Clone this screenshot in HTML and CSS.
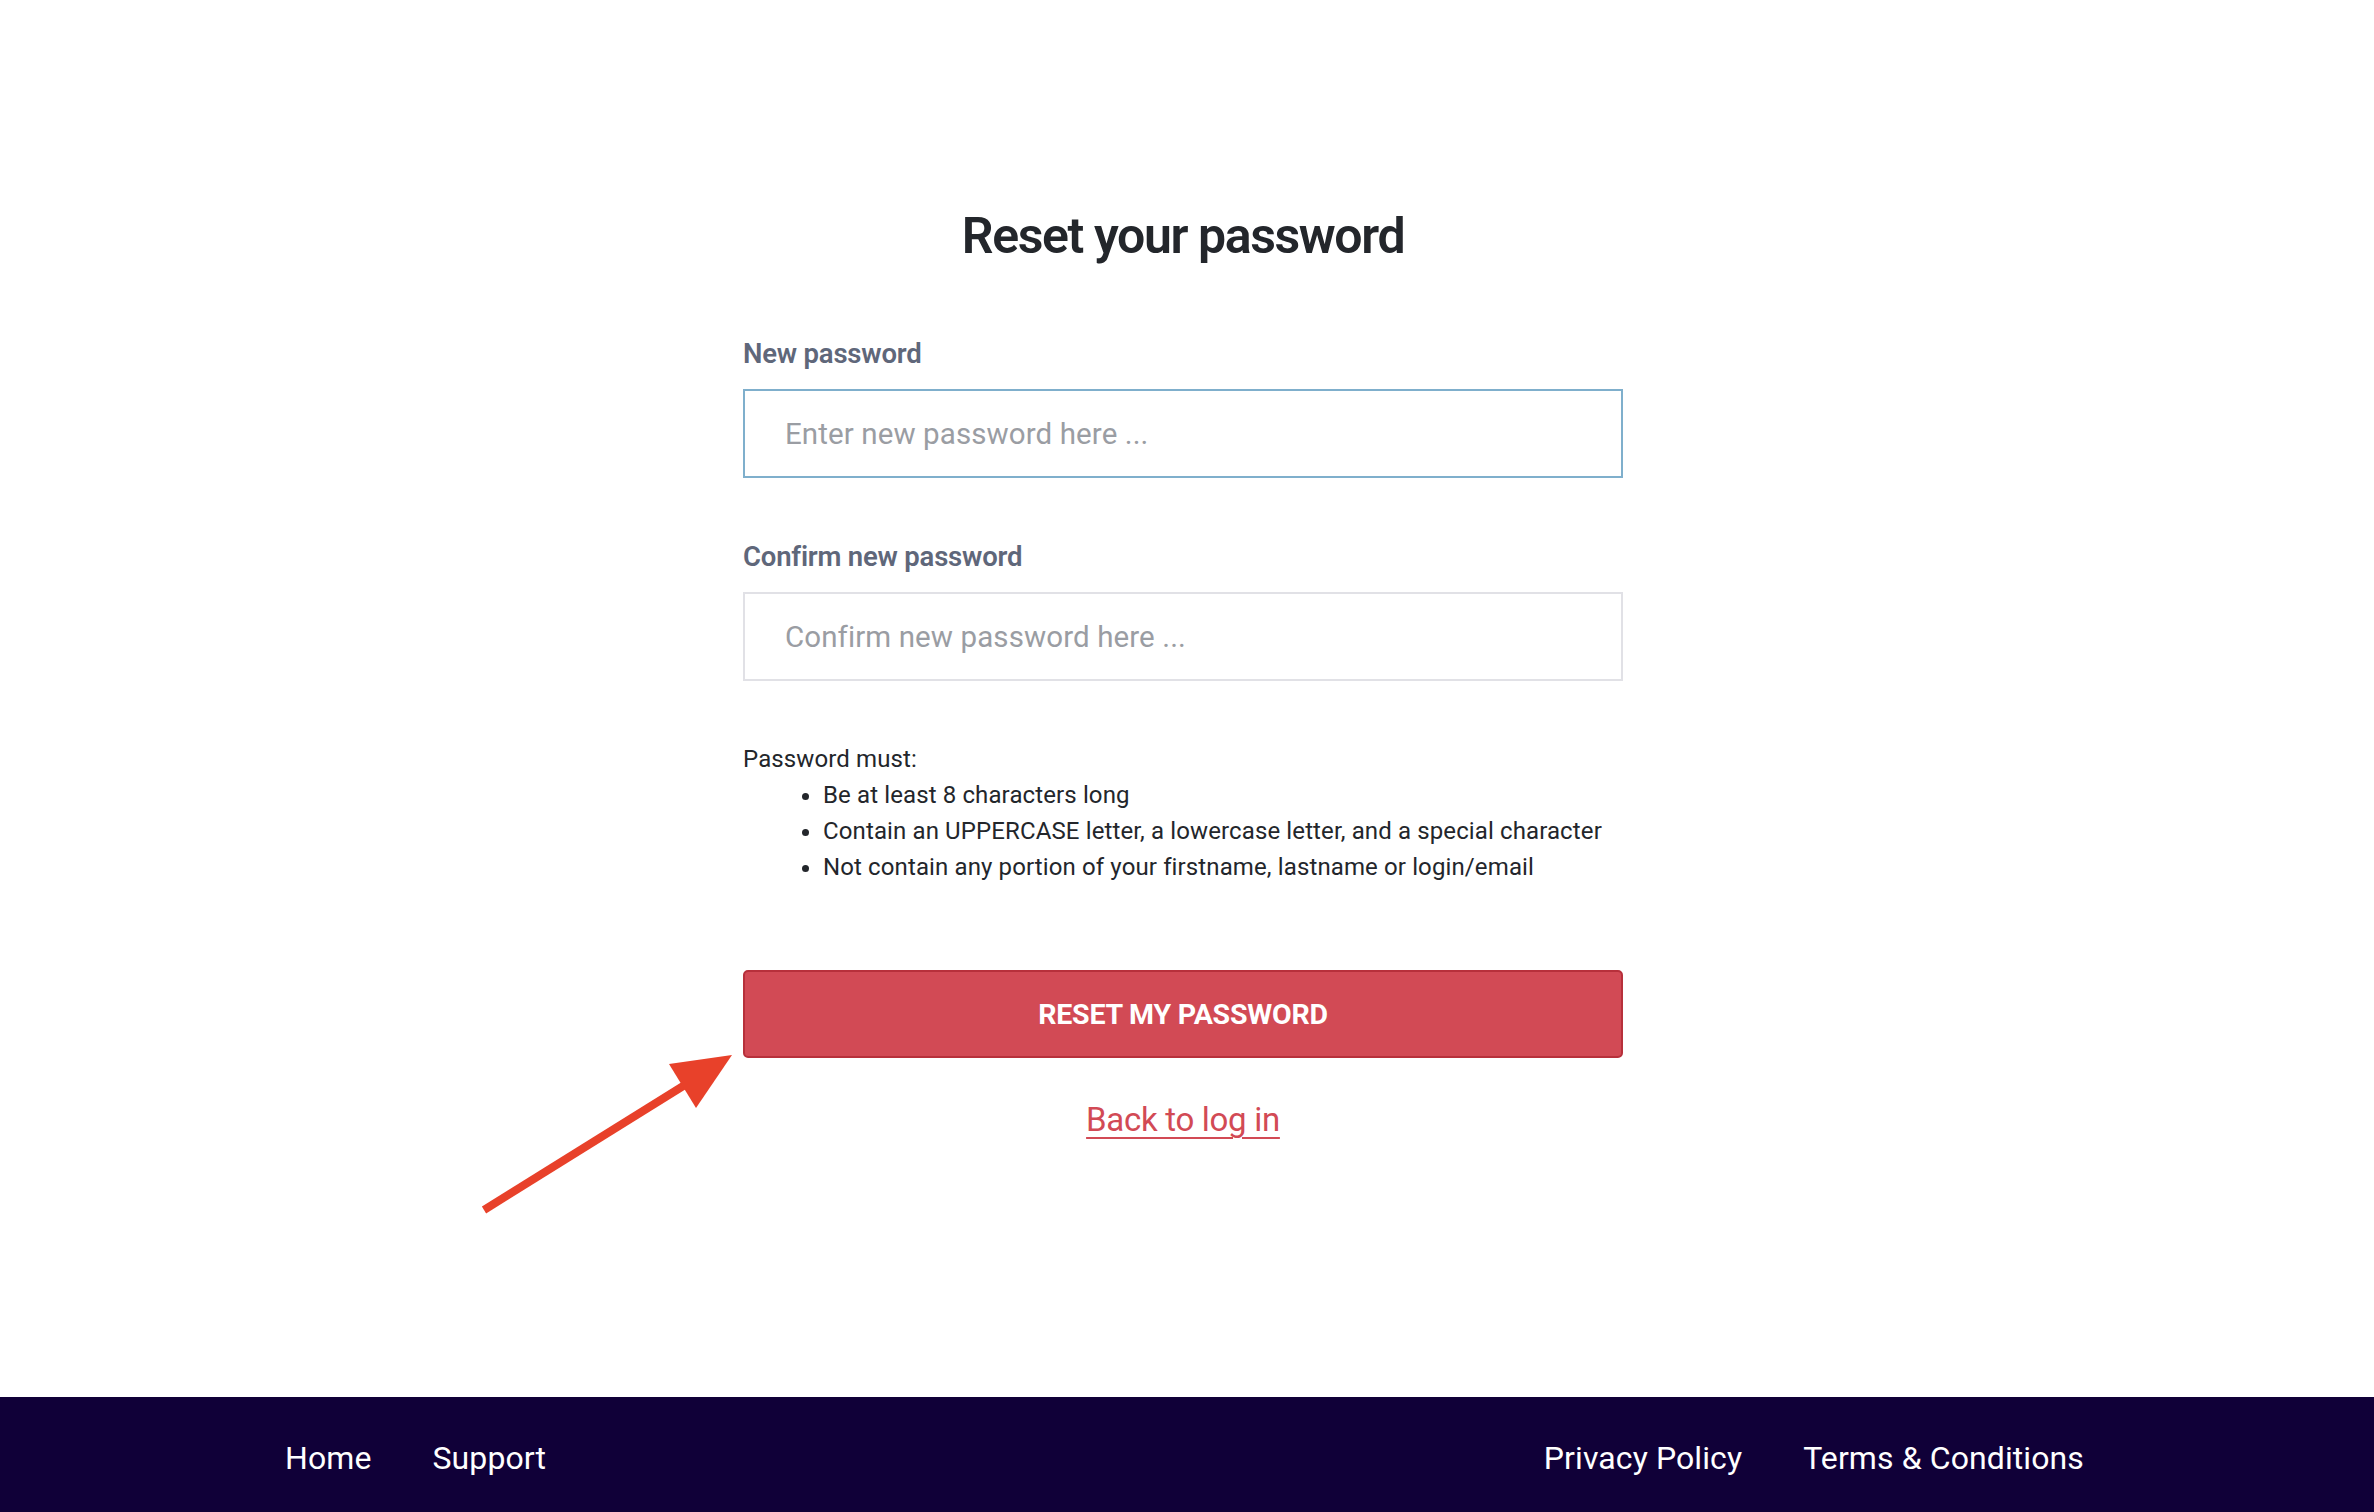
FILE: index.html
```html
<!DOCTYPE html>
<html lang="en">
<head>
<meta charset="utf-8">
<title>Reset your password</title>
<link rel="stylesheet" href="styles.css">
</head>
<body>
<main class="page">
  <section class="card">
    <h1 class="title">Reset your password</h1>
    <form class="form">
      <div class="field">
        <label class="label" for="pw1">New password</label>
        <input class="input input-focus" id="pw1" type="password" placeholder="Enter new password here ...">
      </div>
      <div class="field">
        <label class="label" for="pw2">Confirm new password</label>
        <input class="input" id="pw2" type="password" placeholder="Confirm new password here ...">
      </div>
      <div class="rules">
        <p class="rules-head">Password must:</p>
        <ul class="rules-list">
          <li>Be at least 8 characters long</li>
          <li>Contain an UPPERCASE letter, a lowercase letter, and a special character</li>
          <li>Not contain any portion of your firstname, lastname or login/email</li>
        </ul>
      </div>
      <button class="btn" type="button">RESET MY PASSWORD</button>
      <a class="back" href="#">Back to log in</a>
    </form>
  </section>
  <svg class="arrow" width="260" height="170" viewBox="0 0 260 170">
    <line x1="6" y1="160" x2="210" y2="33" stroke="#e8412a" stroke-width="8"/>
    <polygon points="254,5 191,14 218,58" fill="#e8412a"/>
  </svg>
</main>
<footer class="footer">
  <nav class="foot-left">
    <a href="#">Home</a>
    <a href="#">Support</a>
  </nav>
  <nav class="foot-right">
    <a href="#">Privacy Policy</a>
    <a href="#">Terms &amp; Conditions</a>
  </nav>
</footer>
</body>
</html>
```
FILE: styles.css
```css
* { box-sizing: border-box; }
html, body { margin: 0; padding: 0; }
body {
  font-family: Roboto, "Noto Sans", sans-serif;
  color: #23262b;
  background: #fff;
}
.page {
  position: relative;
  height: 1397px;
  display: flex;
  justify-content: center;
  padding-top: 206px;
}
.card {
  width: 880px;
  margin-right: 8px;
  display: flex;
  flex-direction: column;
}
.title {
  margin: 0 0 73px;
  text-align: center;
  font-size: 50px;
  line-height: 60px;
  font-weight: 600;
  letter-spacing: -1.4px;
  color: #23262b;
}
.form { display: flex; flex-direction: column; }
.field { display: flex; flex-direction: column; margin-bottom: 64px; }
.field + .field { margin-bottom: 60px; }
.label {
  font-size: 27.5px;
  line-height: 30px;
  font-weight: 600;
  letter-spacing: -0.2px;
  color: #5f677a;
  margin-bottom: 20px;
}
.input {
  height: 89px;
  border: 2px solid #e1e1e6;
  border-radius: 0;
  padding: 0 40px;
  font-family: Roboto, "Noto Sans", sans-serif;
  font-size: 29.5px;
  letter-spacing: 0.1px;
  color: #23262b;
  background: #fff;
  outline: none;
}
.input::placeholder { color: #9a9da3; }
.input-focus { border-color: #7fafcc; }
.rules { font-size: 24px; line-height: 36px; letter-spacing: 0.12px; color: #23262b; margin-bottom: 85px; }
.rules-head { margin: 0; }
.rules-list { margin: 0; padding-left: 80px; }
.rules-list li { padding-left: 0; }
.btn {
  height: 88px;
  width: 100%;
  background: #d24a55;
  border: 2px solid #b7303b;
  border-radius: 5px;
  color: #fff;
  font-family: Roboto, "Noto Sans", sans-serif;
  font-size: 28.5px;
  font-weight: 700;
  letter-spacing: -0.2px;
  padding: 0;
}
.back {
  align-self: center;
  margin-top: 42px;
  font-size: 33px;
  line-height: 40px;
  color: #d24a55;
  text-decoration: underline;
  text-underline-offset: 6px;
  text-decoration-thickness: 2px;
  letter-spacing: -0.3px;
}
.arrow {
  position: absolute;
  left: 478px;
  top: 1050px;
}
.footer {
  height: 115px;
  background: #100038;
  display: flex;
  justify-content: space-between;
  align-items: center;
  padding: 6px 290px 0 285px;
}
.footer nav { display: flex; gap: 61px; }
.footer a {
  color: #fff;
  text-decoration: none;
  font-size: 32px;
  letter-spacing: 0.1px;
}
.foot-right { gap: 62px; }
```
